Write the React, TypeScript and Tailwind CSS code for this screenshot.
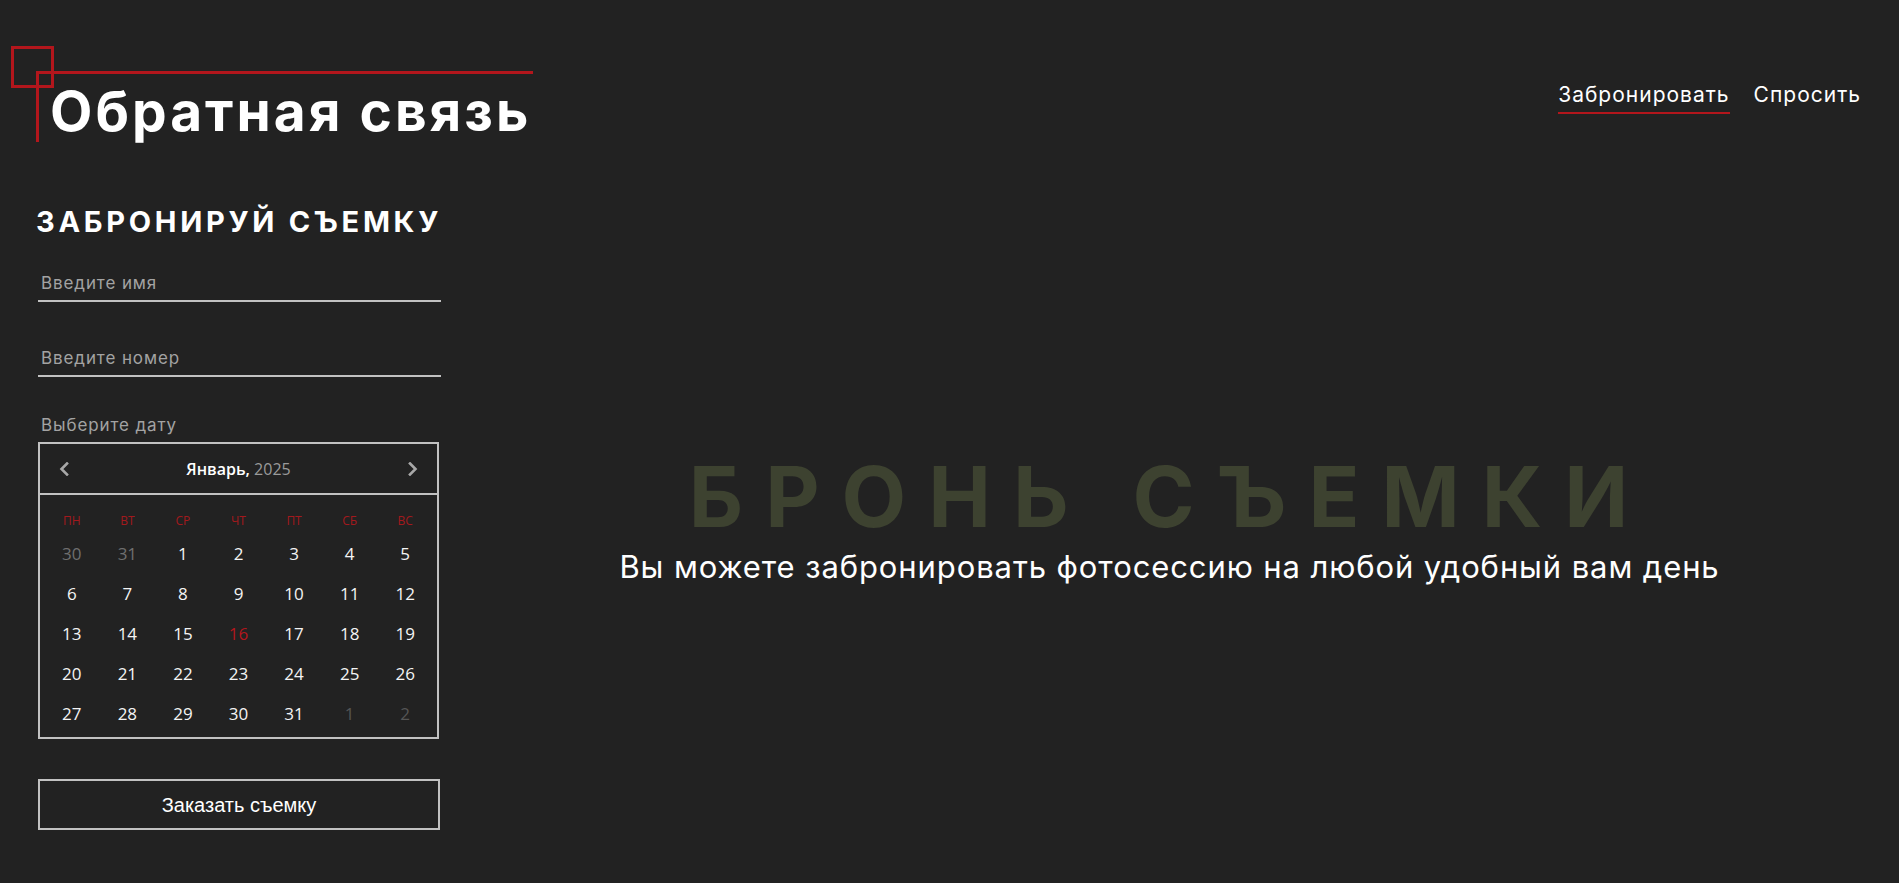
import React from "react";

function ChevronLeft() {
  return (
    <svg width="10" height="14" viewBox="0 0 10 14" fill="none">
      <polyline points="8,1.5 2.5,7 8,12.5" stroke="#a8a8a8" strokeWidth="2.6" strokeLinecap="square" />
    </svg>
  );
}
function ChevronRight() {
  return (
    <svg width="10" height="14" viewBox="0 0 10 14" fill="none">
      <polyline points="2,1.5 7.5,7 2,12.5" stroke="#a8a8a8" strokeWidth="2.6" strokeLinecap="square" />
    </svg>
  );
}

const weekDays = ["ПН", "ВТ", "СР", "ЧТ", "ПТ", "СБ", "ВС"];

type Day = { n: number; kind: "prev" | "cur" | "next" | "today" };

const days: Day[] = [
  { n: 30, kind: "prev" },
  { n: 31, kind: "prev" },
  ...Array.from({ length: 31 }, (_, i) => ({ n: i + 1, kind: (i + 1 === 16 ? "today" : "cur") as Day["kind"] })),
  { n: 1, kind: "next" },
  { n: 2, kind: "next" },
];

function dayClass(k: Day["kind"]) {
  if (k === "prev") return "text-[#6f6f6f]";
  if (k === "next") return "text-[#555555]";
  if (k === "today") return "text-[#b3161c]";
  return "text-[#f4f4f4]";
}

function Calendar() {
  return (
    <div className="mt-[7px] w-[401px] border-2 border-[#c2c2c2] flex flex-col" style={{ fontFamily: '"Open Sans", "Noto Sans", sans-serif' }}>
      <div className="h-[51px] shrink-0 flex items-center justify-between px-[19px] border-b-2 border-[#c2c2c2]">
        <ChevronLeft />
        <div className="text-[16px] leading-none">
          <span className="text-white font-semibold">Январь,</span>
          <span className="text-[#9a9a9a]"> 2025</span>
        </div>
        <ChevronRight />
      </div>
      <div className="px-[4px] pt-[13px] pb-[4px]">
        <div className="grid grid-cols-7 h-[25px] items-center">
          {weekDays.map((d) => (
            <div key={d} className="text-center text-[12px] leading-none text-[#a3191d]">{d}</div>
          ))}
        </div>
        <div className="grid grid-cols-7">
          {days.map((d, i) => (
            <div key={i} className={`h-[40px] flex items-center justify-center text-[17px] leading-none ${dayClass(d.kind)}`}>
              {d.n}
            </div>
          ))}
        </div>
      </div>
    </div>
  );
}

export default function App() {
  return (
    <div className="w-full h-[883px] bg-[#222222] flex overflow-hidden" style={{ fontFamily: 'Inter, "Noto Sans", sans-serif' }}>
      {/* Left column */}
      <div className="relative w-[440px] shrink-0 flex flex-col">
        {/* decorative logo lines */}
        <div className="absolute left-[11px] top-[46px] w-[43px] h-[42px] border-[3px] border-[#b3161c]" />
        <div className="absolute left-[36px] top-[71px] w-[3px] h-[71px] bg-[#b3161c]" />
        <div className="absolute left-[36px] top-[71px] w-[497px] h-[3px] bg-[#b3161c]" />

        <h1 className="relative mt-[84px] pl-[50px] text-[55px] leading-[55px] font-bold text-white tracking-[3px] whitespace-nowrap">
          Обратная связь
        </h1>

        <h2 className="mt-[68px] pl-[36px] text-[29px] leading-[29px] font-bold text-white tracking-[3.7px] whitespace-nowrap">
          ЗАБРОНИРУЙ СЪЕМКУ
        </h2>

        <div className="pl-[38px] flex flex-col">
          <input
            className="mt-[30px] w-[403px] h-[36px] bg-transparent border-b-2 border-[#c2c2c2] pl-[3px] text-[17px] tracking-[0.9px] text-white placeholder:text-[#a3a3a3] outline-none"
            placeholder="Введите имя"
          />
          <input
            className="mt-[39px] w-[403px] h-[36px] bg-transparent border-b-2 border-[#c2c2c2] pl-[3px] text-[17px] tracking-[0.9px] text-white placeholder:text-[#a3a3a3] outline-none"
            placeholder="Введите номер"
          />
          <div className="mt-[38px] h-[20px] pl-[3px] text-[17px] tracking-[0.9px] leading-[20px] text-[#a3a3a3]">Выберите дату</div>
          <Calendar />
          <button
            className="mt-[40px] w-[402px] h-[51px] border-2 border-[#c2c2c2] text-[20px] text-white bg-transparent"
            style={{ fontFamily: '"Liberation Sans", Arial, sans-serif' }}
          >
            Заказать съемку
          </button>
        </div>
      </div>

      {/* Main */}
      <div className="flex-1 flex flex-col">
        <nav className="pt-[82px] pr-[38px] flex justify-end items-start gap-[24px] text-[21px] leading-[25px] text-white tracking-[1px]">
          <span className="pb-[5px] border-b-2 border-[#b3161c]">Забронировать</span>
          <span>Спросить</span>
        </nav>
        <div className="flex flex-col items-center">
          <div className="mt-[341px] text-[84px] leading-[84px] font-bold text-[#3d4230] tracking-[22px] whitespace-nowrap">
            БРОНЬ СЪЕМКИ
          </div>
          <div className="mt-[8px] text-[31px] leading-[40px] text-white tracking-[0.9px] whitespace-nowrap">
            Вы можете забронировать фотосессию на любой удобный вам день
          </div>
        </div>
      </div>
    </div>
  );
}
